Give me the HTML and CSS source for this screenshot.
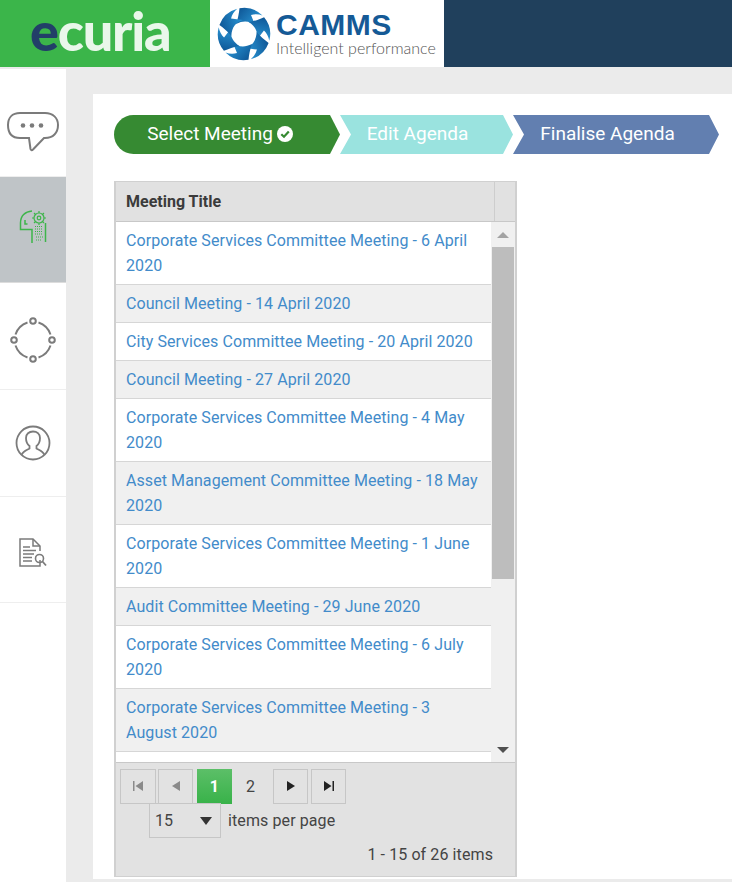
FILE: index.html
```html
<!DOCTYPE html>
<html lang="en">
<head>
<meta charset="utf-8">
<title>Select Meeting</title>
<link rel="stylesheet" href="styles.css">
</head>
<body>
<header class="top">
  <div class="brand"><span class="brand-name"><span class="brand-e">e</span>curia</span></div>
  <div class="camms">
    <svg class="swirl" width="54" height="54" viewBox="-27 -27 54 54">
      <defs>
        <linearGradient id="blade-fill" x1="0" y1="0" x2="1" y2="0.600">
          <stop offset="0" stop-color="#0b4f8f"/>
          <stop offset="1" stop-color="#2a97d6"/>
        </linearGradient>
        <path id="blade" fill="url(#blade-fill)" d="M-4.500 -25.800 A26.200 26.200 0 0 1 18.500 -18.500 C14.500 -20 10.500 -20 7 -19 L11.500 -8 C6 -13 0 -14 -8 -10 C-6 -15 -5 -21 -4.500 -25.800 Z"/>
      </defs>
      <use href="#blade"/>
      <use href="#blade" transform="rotate(60)"/>
      <use href="#blade" transform="rotate(120)"/>
      <use href="#blade" transform="rotate(180)"/>
      <use href="#blade" transform="rotate(240)"/>
      <use href="#blade" transform="rotate(300)"/>
    </svg>
    <div class="camms-text">
      <div class="camms-name">CAMMS</div>
      <div class="camms-tag">Intelligent performance</div>
    </div>
  </div>
  <div class="top-fill"></div>
</header>
<div class="layout">
  <nav class="side">
    <div class="side-item side-item-chat">
      <svg width="54" height="42" viewBox="0 0 54 42" fill="none" stroke="#7b7b7b" stroke-width="2">
        <path d="M14 2 H39 C47 2 52 7 52 14 C52 22 47 27 39 27 H38 L27 38.500 C26 39.500 25 39.500 24.500 38 L23 27 H14 C6 27 2 22 2 14 C2 7 6 2 14 2 Z"/>
        <circle cx="17" cy="14.500" r="2.300" fill="#7b7b7b" stroke="none"/>
        <circle cx="26" cy="14.500" r="2.300" fill="#7b7b7b" stroke="none"/>
        <circle cx="35" cy="14.500" r="2.300" fill="#7b7b7b" stroke="none"/>
      </svg>
    </div>
    <div class="side-item side-item-active">
      <svg width="30" height="36" viewBox="0 0 30 36" fill="none" stroke="#3db54a" stroke-width="1.500">
        <path d="M14 1 C7 1.500 2.500 6 2.500 13 V19.500 H14 V33"/>
        <path d="M7 10 V14 H9.500"/>
        <circle cx="21" cy="8" r="1.800" stroke-width="1.200"/>
        <circle cx="21" cy="8" r="5" stroke-width="1.200"/>
        <path stroke-width="1.200" d="M21 1 V3 M21 13 V15 M14 8 H16 M26 8 H28 M16 3 L17.500 4.500 M24.500 11.500 L26 13 M26 3 L24.500 4.500 M17.500 11.500 L16 13"/>
        <path stroke-width="1.200" d="M17 16.500 H25 M17 19 H25 M17 21.500 H25 M17 24 H25 M18 27 H25 M18 30 H24" stroke-dasharray="1 1"/>
        <path d="M27.500 13 V32"/>
      </svg>
    </div>
    <div class="side-item side-item-nodes">
      <svg width="46" height="46" viewBox="0 0 46 46" fill="none" stroke="#7b7b7b" stroke-width="2">
        <circle cx="23" cy="4" r="2.800"/>
        <circle cx="23" cy="42" r="2.800"/>
        <circle cx="4" cy="23" r="2.800"/>
        <circle cx="42" cy="23" r="2.800"/>
        <path d="M17.500 5.500 A19 19 0 0 0 5.500 17.500 M28.500 5.500 A19 19 0 0 1 40.500 17.500 M5.500 28.500 A19 19 0 0 0 17.500 40.500 M40.500 28.500 A19 19 0 0 1 28.500 40.500"/>
      </svg>
    </div>
    <div class="side-item">
      <svg width="36" height="36" viewBox="0 0 36 36" fill="none" stroke="#7b7b7b" stroke-width="1.800">
        <circle cx="18" cy="18" r="16.500"/>
        <path d="M6.500 30 C8 26 12 25 14.500 23.500 V21 C12 19 11 16 11 13 C11 9 14 6.500 18 6.500 C22 6.500 25 9 25 13 C25 16 24 19 21.500 21 V23.500 C24 25 28 26 29.500 30"/>
      </svg>
    </div>
    <div class="side-item side-item-doc">
      <svg width="28" height="30" viewBox="0 0 28 30" fill="none" stroke="#7b7b7b" stroke-width="1.500">
        <path d="M21 22 V28 H1 V1 H14 L21 8 V13"/>
        <path d="M14 1 V8 H21"/>
        <path d="M4 9 H11 M4 12.500 H17 M4 16 H15 M4 19.500 H13 M4 23 H13" stroke-width="1.600"/>
        <circle cx="20.500" cy="20.500" r="4" stroke-width="1.600"/>
        <path d="M23.500 23.500 L27 27.500" stroke-width="1.800"/>
      </svg>
    </div>
  </nav>
  <main class="card">
    <div class="steps">
      <div class="step step-one">Select Meeting
        <svg class="step-check" width="16" height="16" viewBox="0 0 16 16"><circle cx="8" cy="8" r="8" fill="#fff"/><path d="M4.300 8.200 L7 10.800 L11.800 5.600" fill="none" stroke="#368a32" stroke-width="2.200"/></svg>
      </div>
      <div class="step step-two">Edit Agenda</div>
      <div class="step step-three">Finalise Agenda</div>
    </div>
    <section class="grid">
      <div class="grid-head">
        <div class="grid-title">Meeting Title</div>
        <div class="grid-head-end"></div>
      </div>
      <div class="grid-body">
        <div class="rows">
          <a class="row">Corporate Services Committee Meeting - 6 April 2020</a>
          <a class="row row-alt">Council Meeting - 14 April 2020</a>
          <a class="row">City Services Committee Meeting - 20 April 2020</a>
          <a class="row row-alt">Council Meeting - 27 April 2020</a>
          <a class="row">Corporate Services Committee Meeting - 4 May 2020</a>
          <a class="row row-alt">Asset Management Committee Meeting - 18 May 2020</a>
          <a class="row">Corporate Services Committee Meeting - 1 June 2020</a>
          <a class="row row-alt">Audit Committee Meeting - 29 June 2020</a>
          <a class="row">Corporate Services Committee Meeting - 6 July 2020</a>
          <a class="row row-alt">Corporate Services Committee Meeting - 3 August 2020</a>
        </div>
        <div class="scrollbar">
          <div class="scroll-arrow"><span class="tri-up"></span></div>
          <div class="scroll-track"><div class="scroll-thumb"></div></div>
          <div class="scroll-arrow"><span class="tri-down"></span></div>
        </div>
      </div>
      <div class="pager">
        <div class="pager-nav">
          <button class="pg pg-first pg-off"><svg width="12" height="12" viewBox="0 0 12 12"><path d="M1 1 H2.500 V11 H1 Z M11 1 V11 L3.500 6 Z"/></svg></button>
          <button class="pg pg-off"><svg width="12" height="12" viewBox="0 0 12 12"><path d="M10 1 V11 L2 6 Z"/></svg></button>
          <span class="pg-num pg-current">1</span>
          <span class="pg-num pg-other">2</span>
          <button class="pg"><svg width="12" height="12" viewBox="0 0 12 12"><path d="M2 1 V11 L10 6 Z"/></svg></button>
          <button class="pg pg-last"><svg width="12" height="12" viewBox="0 0 12 12"><path d="M1 1 V11 L8.500 6 Z M9.500 1 H11 V11 H9.500 Z"/></svg></button>
        </div>
        <div class="pager-size">
          <div class="size-select"><span>15</span><span class="tri-select"></span></div>
          <span class="size-label">items per page</span>
        </div>
        <div class="pager-info">1 - 15 of 26 items</div>
      </div>
    </section>
  </main>
</div>
</body>
</html>
```

FILE: styles.css
```css
* { box-sizing: border-box; }
html, body { margin: 0; padding: 0; }
body {
  width: 732px;
  height: 882px;
  overflow: hidden;
  background: #ebebeb;
  font-family: Roboto, "Liberation Sans", sans-serif;
  color: #444;
}

.top { display: flex; height: 67px; }
.brand {
  width: 210px;
  background: #3bb54a;
  display: flex;
  align-items: center;
  padding: 0 0 6px 30px;
}
.brand-name {
  font-family: Lato, sans-serif;
  font-weight: 900;
  font-size: 54px;
  line-height: 60px;
  color: #e9f7ea;
  filter: blur(0.5px);
  letter-spacing: -1.200px;
}
.brand-e { color: #223f68; }
.camms {
  width: 234px;
  background: #fff;
  display: flex;
  align-items: center;
  padding-left: 7px;
  gap: 5px;
}
.swirl { flex: none; }
.camms-text { display: flex; flex-direction: column; margin-top: 2px; }
.camms-name {
  font-family: "Liberation Sans", sans-serif;
  font-weight: 700;
  font-size: 30px;
  line-height: 27px;
  color: #155a96;
  letter-spacing: 0.5px;
}
.camms-tag {
  font-family: Lato, sans-serif;
  font-weight: 300;
  font-size: 16px;
  line-height: 20px;
  color: #555;
  white-space: nowrap;
}
.top-fill { flex: 1; background: #20405c; }

.layout { display: flex; height: 815px; padding-top: 2px; }
.side { width: 66px; background: #fff; flex: none; }
.side-item {
  height: 107px;
  border-bottom: 1px solid #eee;
  display: flex;
  align-items: center;
  justify-content: center;
}
.side-item-chat { height: 108px; padding-top: 18px; }
.side-item-active {
  height: 106px;
  padding-bottom: 3px;
  background: #bfc4c7;
  border-bottom-color: #dcdcdc;
}
.side-item-nodes { padding-top: 8px; }
.side-item-doc { height: 106px; padding-top: 7px; }

.card {
  margin: 25px 0 3px 27px;
  flex: 1;
  background: #fff;
  padding: 21px 0 0 21px;
}

.steps { display: flex; height: 39px; }
.step {
  display: flex;
  align-items: center;
  justify-content: center;
  gap: 4px;
  color: #fff;
  font-size: 19px;
  padding-bottom: 2px;
}
.step-one {
  width: 226px;
  background: #368a32;
  border-radius: 20px 0 0 20px;
  clip-path: polygon(0 0, 216px 0, 226px 50%, 216px 100%, 0 100%);
  padding-right: 14px;
}
.step-two {
  width: 173px;
  background: #9ae3df;
  clip-path: polygon(0 0, 163px 0, 173px 50%, 163px 100%, 0 100%, 11px 50%);
  padding-right: 18px;
}
.step-three {
  width: 206px;
  background: #627fb0;
  clip-path: polygon(0 0, 196px 0, 206px 50%, 196px 100%, 0 100%, 11px 50%);
  padding-right: 17px;
}
.step-check { flex: none; }

.grid {
  margin-top: 27px;
  width: 403px;
  height: 696px;
  border: 1px solid #d0d0d0;
  border-left-width: 2px;
  border-right-width: 2px;
  display: flex;
  flex-direction: column;
  background: #fff;
}
.grid-head {
  display: flex;
  height: 40px;
  flex: none;
  background: #e1e1e1;
  border-bottom: 1px solid #c8c8c8;
}
.grid-title {
  flex: 1;
  padding: 1px 10px 0;
  font-size: 16px;
  font-weight: 700;
  line-height: 38px;
  color: #3b3b3b;
  border-right: 1px solid #cdcdcd;
}
.grid-head-end { width: 20px; }

.grid-body { display: flex; height: 541px; flex: none; border-bottom: 1px solid #c8c8c8; }
.rows { flex: 1; min-width: 0; }
.row {
  display: block;
  padding: 6px 10px;
  font-size: 16px;
  line-height: 25px;
  color: #428bca;
  letter-spacing: 0.08px;
  border-bottom: 1px solid #d6d6d6;
}
.row-alt { background: #f0f0f0; }

.scrollbar {
  width: 24px;
  flex: none;
  background: #f0f0f0;
  display: flex;
  flex-direction: column;
}
.scroll-arrow {
  height: 25px;
  flex: none;
  display: flex;
  align-items: center;
  justify-content: center;
}
.tri-up { border: 6px solid transparent; border-top-width: 0; border-bottom: 6px solid #a3a3a3; }
.tri-down { border: 6px solid transparent; border-bottom-width: 0; border-top: 6px solid #505050; }
.scroll-track { flex: 1; padding: 0 1px; }
.scroll-thumb { height: 332px; background: #bdbdbd; }

.pager {
  flex: 1;
  background: #e2e2e2;
  padding: 6px 0 0 4px;
  font-size: 16px;
  color: #444;
  letter-spacing: 0.1px;
}
.pager-nav { display: flex; align-items: center; height: 34px; }
.pg {
  width: 35px;
  height: 35px;
  flex: none;
  padding: 0;
  border: 1px solid #c6c6c6;
  background: transparent;
  display: flex;
  align-items: center;
  justify-content: center;
  fill: #222;
}
.pg-first { width: 36px; margin-right: 2px; }
.pg-last { margin-left: 3px; }
.pg-off { fill: #8a8a8a; }
.pg-num {
  height: 35px;
  line-height: 35px;
  text-align: center;
  flex: none;
}
.pg-current {
  width: 35px;
  margin-left: 4px;
  color: #fff;
  font-weight: 700;
  background: linear-gradient(#5cbf68, #38b249);
}
.pg-other { width: 37px; margin-right: 4px; }
.pager-size {
  display: flex;
  align-items: center;
  gap: 7px;
  margin-left: 29px;
  height: 35px;
}
.size-select {
  width: 72px;
  height: 35px;
  border: 1px solid #c6c6c6;
  display: flex;
  align-items: center;
  justify-content: space-between;
  padding: 0 8px 0 5px;
}
.tri-select { border: 6px solid transparent; border-bottom-width: 0; border-top: 8px solid #333; }
.pager-info {
  margin-top: 7px;
  padding-right: 22px;
  text-align: right;
  line-height: 20px;
}
```
